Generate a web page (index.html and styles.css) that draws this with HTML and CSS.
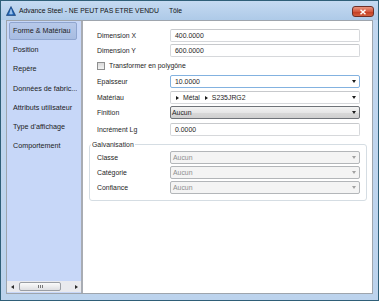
FILE: index.html
```html
<!DOCTYPE html>
<html lang="fr">
<head>
    <meta charset="UTF-8">
    <title>Advance Steel - Tôle</title>
    <link rel="stylesheet" href="styles.css">
</head>
<body>

    <div class="window">
        <div class="titlebar">
            <svg class="app-icon" width="10" height="10" viewBox="0 0 10 10">
                <polygon points="5,0.5 9.6,9.5 0.4,9.5" fill="#1c5cab" stroke="#10396e" stroke-width="0.6"/>
                <polygon points="5,3.2 7.4,8.3 2.6,8.3" fill="#6fa6e0"/>
                <line x1="5" y1="3.2" x2="5" y2="8.3" stroke="#ffffff" stroke-width="0.6"/>
            </svg>
            <span class="title">Advance Steel - NE PEUT PAS ETRE VENDU</span>
            <span class="title doc">Tôle</span>
            <div class="close">
                <svg width="8" height="6" viewBox="0 0 8 6">
                    <path d="M1.5 0.8 L6.5 5.2 M6.5 0.8 L1.5 5.2" stroke="#ffffff" stroke-width="1.5"/>
                </svg>
            </div>
        </div>

        <div class="client">
            <div class="sidebar">
                <ul class="tabs">
                    <li class="active">Forme &amp; Matériau</li>
                    <li>Position</li>
                    <li>Repère</li>
                    <li>Données de fabric...</li>
                    <li>Attributs utilisateur</li>
                    <li>Type d'affichage</li>
                    <li>Comportement</li>
                </ul>
                <div class="hscroll">
                    <span class="arrow left"></span>
                    <span class="thumb"><span class="grip"></span></span>
                    <span class="arrow right"></span>
                </div>
            </div>

            <div class="form">
                <div class="row">
                    <span class="label">Dimension X</span>
                    <div class="field">400.0000</div>
                </div>
                <div class="row">
                    <span class="label">Dimension Y</span>
                    <div class="field">600.0000</div>
                </div>
                <div class="row check-row">
                    <span class="checkbox"></span>
                    <span>Transformer en polygône</span>
                </div>
                <div class="row tall">
                    <span class="label">Epaisseur</span>
                    <div class="field combo focus">10.0000<span class="caret"></span></div>
                </div>
                <div class="row">
                    <span class="label">Matériau</span>
                    <div class="field combo">
                        <span class="crumb"></span><span>Métal</span><span class="crumb sub"></span><span>S235JRG2</span>
                        <span class="caret"></span>
                    </div>
                </div>
                <div class="row taller">
                    <span class="label">Finition</span>
                    <div class="field combo button">Aucun<span class="caret"></span></div>
                </div>
                <div class="row">
                    <span class="label">Incrément Lg</span>
                    <div class="field">0.0000</div>
                </div>

                <fieldset class="group">
                    <legend>Galvanisation</legend>
                    <div class="row">
                        <span class="label">Classe</span>
                        <div class="field combo disabled">Aucun<span class="caret"></span></div>
                    </div>
                    <div class="row">
                        <span class="label">Catégorie</span>
                        <div class="field combo disabled">Aucun<span class="caret"></span></div>
                    </div>
                    <div class="row">
                        <span class="label">Confiance</span>
                        <div class="field combo disabled">Aucun<span class="caret"></span></div>
                    </div>
                </fieldset>
            </div>
        </div>
    </div>

</body>
</html>
```

FILE: styles.css
```css
body {
    margin: 0;
    padding: 0;
    font-family: 'Liberation Sans', Arial, sans-serif;
    background-color: #ffffff;
}

.window {
    width: 379px;
    height: 301px;
    box-sizing: border-box;
    border: 1px solid #2f5f78;
    background: linear-gradient(#c2d7ef, #bcd3ed);
    display: flex;
    flex-direction: column;
}

/* Title bar */
.titlebar {
    height: 19px;
    display: flex;
    align-items: center;
    padding-left: 5px;
    background: linear-gradient(#c5daf1, #aecae8);
}

.app-icon {
    margin-right: 3px;
    margin-top: 1px;
}

.title {
    font-size: 6.8px;
    color: #111111;
    white-space: nowrap;
}

.title.doc {
    margin-left: 10px;
}

.close {
    margin-left: auto;
    margin-right: 4px;
    margin-top: 2px;
    width: 22px;
    height: 11px;
    box-sizing: border-box;
    border: 1px solid #6e2f27;
    border-radius: 3px;
    background: linear-gradient(#e89580, #d45a40 50%, #c23a20 51%, #d3603f);
    display: flex;
    align-items: center;
    justify-content: center;
}

/* Client area */
.client {
    flex: 1;
    margin: 0 5px 6px 5px;
    border: 1px solid #9ea5ad;
    display: flex;
    background-color: #ffffff;
}

.sidebar {
    width: 74px;
    background-color: #c7d7f8;
    border-right: 2px solid #a8acb3;
    display: flex;
    flex-direction: column;
}

.tabs {
    list-style: none;
    margin: 0;
    padding: 1px 4px 0 2px;
}

.tabs li {
    height: 18px;
    line-height: 18px;
    margin-bottom: 1.2px;
    padding-left: 4px;
    font-size: 7.2px;
    color: #1b1b1b;
    white-space: nowrap;
    overflow: hidden;
}

.tabs li.active {
    box-sizing: border-box;
    line-height: 16px;
    padding-left: 3px;
    border: 1px solid #8fa5cf;
    border-radius: 2px;
    background: linear-gradient(#b7c9e9, #a7bce1);
}

.hscroll {
    margin-top: auto;
    margin-bottom: 1px;
    height: 11px;
    display: flex;
    align-items: center;
    background-color: #e9eaee;
    padding: 0 3px 0 4px;
}

.arrow {
    width: 0;
    height: 0;
    border-top: 2.5px solid transparent;
    border-bottom: 2.5px solid transparent;
}

.arrow.left {
    border-right: 3px solid #2a2a2a;
}

.arrow.right {
    border-left: 3px solid #2a2a2a;
    margin-left: auto;
}

.thumb {
    margin-left: 5px;
    width: 42px;
    height: 9px;
    box-sizing: border-box;
    border: 1px solid #9a9ea4;
    border-radius: 2px;
    background: linear-gradient(#fbfbfb, #dedfe2);
    display: flex;
    align-items: center;
    justify-content: center;
}

.grip {
    width: 5px;
    height: 3px;
    background: repeating-linear-gradient(90deg, #777 0 1px, transparent 1px 2px);
}

/* Form */
.form {
    flex: 1;
    padding: 7px 12px 0 14px;
    font-size: 6.9px;
    color: #1e1e1e;
}

.row {
    display: flex;
    align-items: flex-start;
    height: 15px;
    padding-top: 1px;
    box-sizing: border-box;
}

.row.tall {
    height: 16px;
}

.row.taller {
    height: 17px;
}

.label {
    width: 73px;
    flex-shrink: 0;
    line-height: 13px;
}

.field {
    width: 190px;
    height: 13px;
    box-sizing: border-box;
    border: 1px solid #d6d8db;
    border-top-color: #c7c9cc;
    border-radius: 2px;
    padding: 0 3px 0 4px;
    display: flex;
    align-items: center;
    white-space: nowrap;
}

.combo .caret {
    margin-left: auto;
    width: 0;
    height: 0;
    border-left: 2.5px solid transparent;
    border-right: 2.5px solid transparent;
    border-top: 3px solid #1a1a1a;
}

.field.focus {
    border-color: #83b2e0;
}

.crumb {
    width: 0;
    height: 0;
    border-top: 2.5px solid transparent;
    border-bottom: 2.5px solid transparent;
    border-left: 3px solid #1a1a1a;
    margin: 0 4px 0 1px;
}

.crumb.sub {
    margin-left: 5px;
}

.field.button {
    border-color: #6f7378;
    padding-left: 1px;
    background: linear-gradient(#f3f3f3, #e6e6e6 50%, #d9d9d9 51%, #cfcfcf);
}

.field.disabled {
    border-color: #b3b6b9;
    background-color: #f4f4f4;
    color: #8e8e8e;
    padding-left: 2px;
}

.field.disabled .caret {
    border-top-color: #a2a2a2;
}

.check-row {
    height: 16px;
    padding-top: 4px;
}

.checkbox {
    width: 8px;
    height: 8px;
    box-sizing: border-box;
    border: 1px solid #8e8f8f;
    background: linear-gradient(#d9d9d9, #f2f2f2);
    margin-right: 4px;
}

.check-row span:last-child {
    line-height: 8px;
}

/* Galvanisation group */
.group {
    margin: 3px -6px 0 -8px;
    padding: 1px 6px 5px 7px;
    border: 1px solid #d5dde3;
    border-radius: 3px;
}

.group legend {
    margin-left: -6px;
    padding: 0 1px;
    line-height: 9px;
    color: #2a2a2a;
}
```
